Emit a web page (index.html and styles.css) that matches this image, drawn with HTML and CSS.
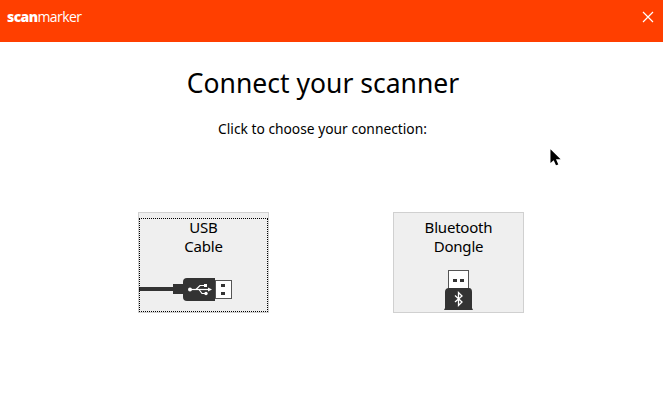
FILE: index.html
```html
<!DOCTYPE html>
<html lang="en">
<head>
    <meta charset="UTF-8">
    <title>Connect your scanner</title>
    <link rel="stylesheet" href="styles.css">
</head>
<body>
    <div class="topbar">
        <div class="logo"><b>scan</b>marker</div>
        <svg class="close" width="12" height="12" viewBox="0 0 12 12"><path d="M1 1L11 11M11 1L1 11" stroke="#fff" stroke-width="1.2" fill="none"/></svg>
    </div>
    <div class="main">
        <h1>Connect your scanner</h1>
        <p class="hint">Click to choose your connection:</p>
        <div class="choices">
            <button class="choice choice-focus">
                <span class="label">USB<br>Cable</span>
                <svg class="usb" width="95" height="24" viewBox="0 0 95 24">
                    <rect x="0" y="9" width="35" height="4" fill="#333"/>
                    <rect x="34" y="6" width="11" height="10" fill="#333"/>
                    <path d="M48 0H76V23H48Q44 23 44 19V4Q44 0 48 0Z" fill="#333"/>
                    <rect x="76.500" y="2.500" width="16" height="18" fill="#fff" stroke="#555"/>
                    <rect x="82" y="6" width="4" height="3" fill="#333"/>
                    <rect x="82" y="14" width="4" height="3" fill="#333"/>
                    <g fill="none" stroke="#fff" stroke-width="1.2">
                        <path d="M51 11.500H70"/>
                        <path d="M57 11.500L61 7.500H65"/>
                        <path d="M60 11.500L63 15.500H66"/>
                    </g>
                    <circle cx="51" cy="11.500" r="2" fill="#fff"/>
                    <path d="M73 11.500L69 9.500V13.500Z" fill="#fff"/>
                    <rect x="65" y="6" width="3" height="3" fill="#fff"/>
                    <circle cx="67" cy="15.500" r="1.700" fill="#fff"/>
                </svg>
            </button>
            <button class="choice">
                <span class="label">Bluetooth<br>Dongle</span>
                <svg class="dongle" width="30" height="40" viewBox="0 0 30 40">
                    <rect x="4.500" y="0.500" width="20" height="20" fill="#fff" stroke="#555"/>
                    <rect x="9" y="9" width="4" height="3" fill="#333"/>
                    <rect x="16" y="9" width="4" height="3" fill="#333"/>
                    <path d="M5 18H25Q28 18 28 22V38L29 40H0L1 38V22Q1 18 5 18Z" fill="#333"/>
                    <path d="M11 25.500L18 32L14.500 35.500V22.500L18 26L11 32" fill="none" stroke="#fff" stroke-width="1.300"/>
                </svg>
            </button>
        </div>
    </div>
    <svg class="cursor" width="12" height="19" viewBox="0 0 13 19"><path d="M0.500 0.500V15.500L4 12.500L6.500 18L9 17L6.500 11.500H11.500Z" fill="#000"/></svg>
</body>
</html>
```

FILE: styles.css
```css
*{
    margin:0;
    padding:0;
    box-sizing:border-box;
}
body{
    width:663px;
    height:405px;
    overflow:hidden;
    background:#fff;
    color:#000;
    font-family:"Noto Sans","Open Sans",sans-serif;
}
.topbar{
    height:42px;
    background:#ff3f00;
    display:flex;
    align-items:center;
    justify-content:space-between;
    padding:0 8px 9px 7px;
}
.logo{
    color:#fff;
    font-size:14px;
    font-weight:400;
    font-family:"Open Sans",sans-serif;
    letter-spacing:-0.6px;
}
.logo b{
    font-weight:800;
}
.close{
    margin-top:1px;
    margin-right:1px;
}
.main{
    display:flex;
    flex-direction:column;
}
h1{
    font-size:26.5px;
    font-weight:400;
    line-height:36px;
    text-align:center;
    margin-top:23px;
    margin-right:17px;
}
.hint{
    font-size:13.8px;
    line-height:20px;
    text-align:center;
    margin-top:18px;
    margin-right:18px;
}
.choices{
    display:flex;
    gap:124px;
    padding-left:138px;
    margin-top:73px;
}
.choice{
    position:relative;
    width:131px;
    height:101px;
    background:#efefef;
    border:1px solid #d0d0d0;
    font:inherit;
    font-size:15px;
    letter-spacing:-0.2px;
    line-height:19px;
    color:#000;
    display:flex;
    flex-direction:column;
    align-items:center;
    padding-top:5px;
}
.choice-focus::after{
    content:"";
    position:absolute;
    left:0;
    right:0;
    top:5px;
    bottom:0;
    border:1px dotted #000;
}
.usb{
    align-self:flex-start;
    margin-top:22px;
}
.dongle{
    margin-top:14px;
}
.cursor{
    position:absolute;
    left:550px;
    top:148px;
}
```
